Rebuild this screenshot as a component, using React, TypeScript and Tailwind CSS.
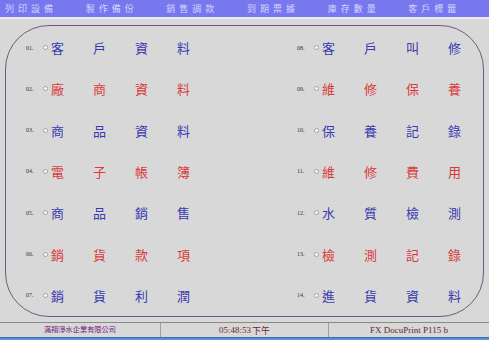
import React from "react";

const cjk = { fontFamily: '"Noto Sans CJK TC", "Noto Sans CJK SC", sans-serif' };
const serif = { fontFamily: '"Liberation Serif", "Noto Sans CJK TC", serif' };

const menu = ["列印設備", "製作備份", "銷售調款", "到期票據", "庫存數量", "客戶標籤"];

type Entry = { no: string; text: string; red: boolean };

const left: Entry[] = [
    { no: "01.", text: "客戶資料", red: false },
    { no: "02.", text: "廠商資料", red: true },
    { no: "03.", text: "商品資料", red: false },
    { no: "04.", text: "電子帳簿", red: true },
    { no: "05.", text: "商品銷售", red: false },
    { no: "06.", text: "銷貨款項", red: true },
    { no: "07.", text: "銷貨利潤", red: false },
];

const right: Entry[] = [
    { no: "08.", text: "客戶叫修", red: false },
    { no: "09.", text: "維修保養", red: true },
    { no: "10.", text: "保養記錄", red: false },
    { no: "11.", text: "維修費用", red: true },
    { no: "12.", text: "水質檢測", red: false },
    { no: "13.", text: "檢測記錄", red: true },
    { no: "14.", text: "進貨資料", red: false },
];

function Item({ entry }: { entry: Entry }) {
    return (
        <div className="h-[42px] flex items-center">
            <span className="w-[17px] text-[6px] text-[#333] leading-none" style={serif}>{entry.no}</span>
            <span className="w-[8px] flex items-center">
                <span className="w-[5px] h-[5px] rounded-full border border-[#a0a0a0] bg-white" />
            </span>
            {entry.text.split("").map((ch, i) => (
                <span
                    key={i}
                    className={`${i < 3 ? "w-[42px]" : "w-[14px]"} text-[13px] leading-none ${entry.red ? "text-[#d83a3a]" : "text-[#3838b0]"}`}
                    style={cjk}
                >
                    {ch}
                </span>
            ))}
        </div>
    );
}

export default function App() {
    return (
        <div className="w-[489px] h-[340px] bg-[#d8d8d8] flex flex-col overflow-hidden">
            <div className="h-[17px] bg-[#7878ee] flex items-center pl-[5px]">
                {menu.map((m) => (
                    <span key={m} className="w-[85px] text-[9px] tracking-[4px] text-[#d4d4ff] leading-none" style={cjk}>
                        {m}
                    </span>
                ))}
            </div>
            <div className="h-[2px] bg-[#ececec]" />

            <div className="mx-[5px] mt-[6px] h-[292px] rounded-[44px] border border-[#6e5c7e] flex pt-[1px]">
                <div className="w-[291px] pl-[20px] flex flex-col">
                    {left.map((e) => <Item key={e.no} entry={e} />)}
                </div>
                <div className="flex flex-col">
                    {right.map((e) => <Item key={e.no} entry={e} />)}
                </div>
            </div>

            <div className="mt-[5px] h-[15px] border-t border-[#8a8a8a] flex text-[9px] leading-none" style={serif}>
                <div className="w-[160px] flex items-center justify-center text-[#702080] text-[7.2px]" style={cjk}>
                    滿翔淨水企業有限公司
                </div>
                <div className="w-[168px] border-l border-[#a0a0a0] flex items-center justify-center text-[#6a2a2a]">
                    05:48:53 <span className="ml-[1px]" style={cjk}>下午</span>
                </div>
                <div className="flex-1 border-l border-[#a0a0a0] flex items-center justify-center text-[#5a2a2a]">
                    FX DocuPrint P115 b
                </div>
            </div>
            <div className="flex-1 bg-[#5b8fd6] border-t border-[#3a6ab0]" />
        </div>
    );
}
